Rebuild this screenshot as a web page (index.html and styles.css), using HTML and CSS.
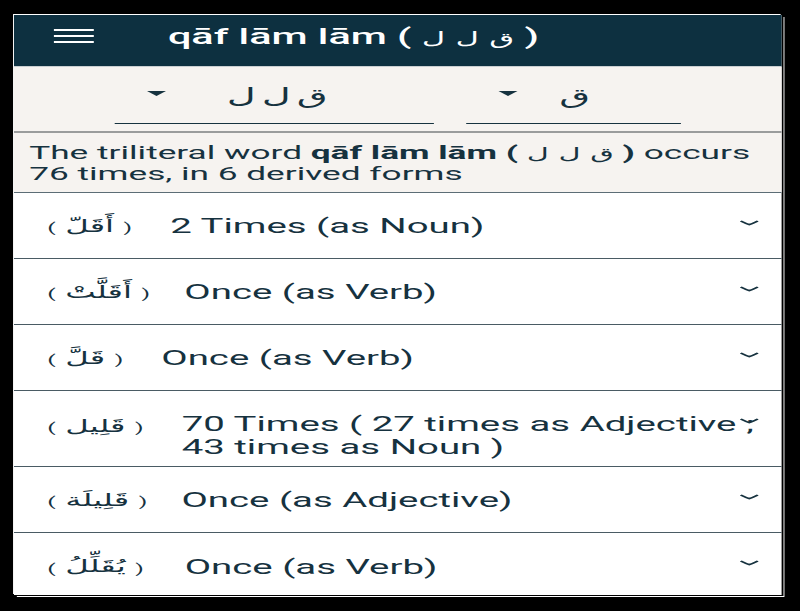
FILE: index.html
```html
<!DOCTYPE html>
<html lang="en">
<head>
    <meta charset="UTF-8">
    <title>qāf lām lām</title>
    <link rel="stylesheet" href="styles.css">
</head>
<body>
    <div class="app">
        <header class="topbar">
            <div class="menu-icon"><span></span><span></span><span></span></div>
            <h1 class="title">qāf lām lām ( <span class="ar">ق ل ل</span> )</h1>
        </header>
        <div class="filters">
            <div class="select select-root">
                <span class="caret"></span>
                <span class="select-value ar">ق ل ل</span>
            </div>
            <div class="select select-letter">
                <span class="caret"></span>
                <span class="select-value ar">ق</span>
            </div>
        </div>
        <p class="intro">The triliteral word <b>qāf lām lām ( <span class="ar">ق ل ل</span> )</b> occurs 76 times, in 6 derived forms</p>
        <ul class="forms">
            <li class="form">
                <span class="form-word"><i>(</i><span class="ar">أَقَلّ</span><i>)</i></span>
                <span class="form-text">2 Times (as Noun)</span>
                <svg class="chevron" viewBox="0 0 10 6"><path d="M0.5 1 Q3 3.4 5 4.6 Q7 3.4 9.5 1"/></svg>
            </li>
            <li class="form form-tight">
                <span class="form-word"><i>(</i><span class="ar">أَقَلَّتْ</span><i>)</i></span>
                <span class="form-text">Once (as Verb)</span>
                <svg class="chevron" viewBox="0 0 10 6"><path d="M0.5 1 Q3 3.4 5 4.6 Q7 3.4 9.5 1"/></svg>
            </li>
            <li class="form">
                <span class="form-word"><i>(</i><span class="ar">قَلَّ</span><i>)</i></span>
                <span class="form-text">Once (as Verb)</span>
                <svg class="chevron" viewBox="0 0 10 6"><path d="M0.5 1 Q3 3.4 5 4.6 Q7 3.4 9.5 1"/></svg>
            </li>
            <li class="form form-tall">
                <span class="form-word"><i>(</i><span class="ar">قَلِيل</span><i>)</i></span>
                <span class="form-text">70 Times ( 27 times as Adjective ; 43 times as Noun )</span>
                <svg class="chevron" viewBox="0 0 10 6"><path d="M0.5 1 Q3 3.4 5 4.6 Q7 3.4 9.5 1"/></svg>
            </li>
            <li class="form form-tight">
                <span class="form-word"><i>(</i><span class="ar">قَلِيلَة</span><i>)</i></span>
                <span class="form-text">Once (as Adjective)</span>
                <svg class="chevron" viewBox="0 0 10 6"><path d="M0.5 1 Q3 3.4 5 4.6 Q7 3.4 9.5 1"/></svg>
            </li>
            <li class="form form-wide">
                <span class="form-word"><i>(</i><span class="ar">يُقَلِّلُ</span><i>)</i></span>
                <span class="form-text">Once (as Verb)</span>
                <svg class="chevron" viewBox="0 0 10 6"><path d="M0.5 1 Q3 3.4 5 4.6 Q7 3.4 9.5 1"/></svg>
            </li>
        </ul>
    </div>
</body>
</html>
```
FILE: styles.css
```css
:root {
    --ink: #16323f;
    --bar: #0d3040;
    --paper: #f6f3f0;
}
* {
    box-sizing: border-box;
    margin: 0;
    padding: 0;
}
html, body {
    height: 100%;
    overflow: hidden;
}
body {
    background: #000;
    padding: 15px 0 0 14px;
    font-family: Roboto, 'Liberation Sans', sans-serif;
    color: var(--ink);
}
/* the source screenshot is stretched sideways, so the whole app is too */
.app {
    width: 404px;
    height: 580px;
    background: #fff;
    box-shadow: 1px 1px 0 #000, 1.5px 2px 0 #fff, -0.5px -1px 0 #fff;
    transform: scaleX(1.9);
    transform-origin: left top;
}
.ar {
    font-family: 'DejaVu Sans', 'Noto Sans', sans-serif;
    font-weight: 400;
}
.topbar {
    height: 52px;
    background: var(--bar);
    color: #fff;
    display: flex;
    align-items: center;
    padding-left: 21px;
    border-bottom: 1px solid #c9cfd2;
}
.menu-icon {
    width: 21px;
    display: flex;
    flex-direction: column;
    gap: 4px;
    margin-bottom: 9px;
}
.menu-icon span {
    height: 2px;
    background: #fff;
}
.title {
    font-size: 21.8px;
    font-weight: 500;
    margin-left: 39px;
    margin-bottom: 8px;
    white-space: nowrap;
}
.title .ar {
    font-size: 17px;
}
.filters {
    height: 64px;
    background: var(--paper);
    display: flex;
    padding-left: 53px;
    gap: 17px;
}
.select {
    height: 57px;
    border-bottom: 1px solid var(--ink);
    display: flex;
    align-items: center;
}
.select-root {
    width: 168px;
}
.select-letter {
    width: 112.5px;
}
.caret {
    border-left: 5px solid transparent;
    border-right: 5px solid transparent;
    border-top: 5px solid var(--ink);
    margin: 0 0 3px 17px;
}
.select-value {
    font-size: 21px;
    word-spacing: -3.5px;
    margin-top: 2px;
}
.select-root .select-value {
    margin-left: 32px;
}
.select-letter .select-value {
    margin-left: 22px;
}
.intro {
    height: 62px;
    background: var(--paper);
    border-top: 2px solid #9a9c9c;
    border-bottom: 1px solid #5c6d76;
    padding: 10px 10px 0 8px;
    font-size: 18.55px;
    line-height: 21px;
}
.intro .ar {
    font-size: 16px;
}
.forms {
    list-style: none;
}
.form {
    position: relative;
    height: 66px;
    border-bottom: 1px solid #4a5b64;
    display: flex;
    align-items: center;
    padding-left: 17.5px;
}
.form:last-child {
    border-bottom: 0;
}
.form-tall {
    height: 76px;
}
.form-word {
    display: flex;
    align-items: center;
    gap: 5px;
    font-size: 17px;
    white-space: nowrap;
    margin-right: 20px;
}
.form-tight .form-word {
    margin-right: 18px;
}
.form-wide .form-word {
    margin-right: 21.5px;
}
.form-word i {
    font-style: normal;
    font-size: 13px;
    margin-top: 4px;
}
.form-text {
    font-size: 20.2px;
    line-height: 22px;
    max-width: 304px;
    margin-top: 1px;
}
.form-tall .form-text {
    line-height: 23px;
    margin-top: 14px;
}
.form-tall .form-word {
    margin-top: -6px;
}
.chevron {
    position: absolute;
    right: 12px;
    top: 27px;
    width: 10px;
    height: 6px;
    fill: none;
    stroke: var(--ink);
    stroke-width: 1.5;
}
```
